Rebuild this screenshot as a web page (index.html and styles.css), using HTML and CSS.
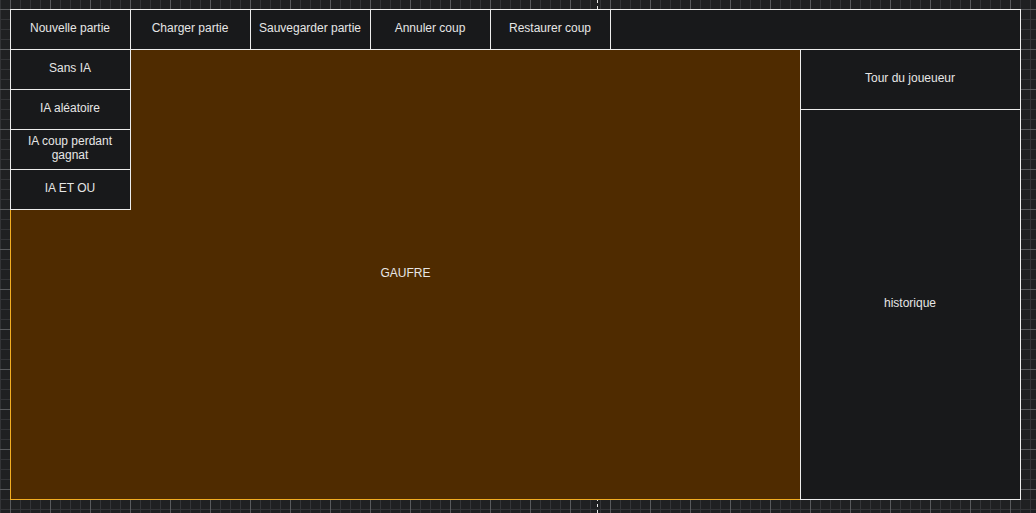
FILE: index.html
```html
<!DOCTYPE html>
<html lang="fr">
<head>
<meta charset="utf-8">
<title>Gaufre</title>
<link rel="stylesheet" href="styles.css">
</head>
<body>
<div class="app">
  <div class="toolbar">
    <div class="box btn">Nouvelle partie</div>
    <div class="box btn">Charger partie</div>
    <div class="box btn">Sauvegarder partie</div>
    <div class="box btn">Annuler coup</div>
    <div class="box btn">Restaurer coup</div>
    <div class="box filler"></div>
  </div>
  <div class="main">
    <div class="gaufre">
      <div class="gaufre-label">GAUFRE</div>
      <div class="menu">
        <div class="box item">Sans IA</div>
        <div class="box item">IA aléatoire</div>
        <div class="box item">IA coup perdant gagnat</div>
        <div class="box item">IA ET OU</div>
      </div>
    </div>
    <div class="side">
      <div class="box turn">Tour du joueueur</div>
      <div class="box history">historique</div>
    </div>
  </div>
</div>
</body>
</html>
```

FILE: styles.css
```css
html, body {
  margin: 0;
  height: 100%;
}

body {
  padding: 9px 0 0 10px;
  box-sizing: border-box;
  background-color: #1f2022;
  background-image:
    repeating-linear-gradient(to bottom, #e8e8e8 0 3px, transparent 3px 6px),
    linear-gradient(to right, #58595c 1px, transparent 1px),
    linear-gradient(to bottom, #58595c 1px, transparent 1px),
    linear-gradient(to right, #333437 1px, transparent 1px),
    linear-gradient(to bottom, #333437 1px, transparent 1px);
  background-size: 1px 100%, 40px 40px, 40px 40px, 10px 10px, 10px 10px;
  background-position: 597px 0, 10px 9px, 10px 9px, 10px 9px, 10px 9px;
  background-repeat: no-repeat, repeat, repeat, repeat, repeat;
  font-family: "Liberation Sans", Arial, sans-serif;
  font-size: 12px;
  line-height: 14px;
  color: #e6e6e6;
}

.app {
  width: 1011px;
  display: flex;
  flex-direction: column;
}

.box {
  box-sizing: border-box;
  border: 1px solid #ededed;
  background: #18191b;
  display: flex;
  align-items: center;
  justify-content: center;
  text-align: center;
  padding: 0 4px 3px 3px;
}

.toolbar {
  display: flex;
  height: 41px;
  position: relative;
  z-index: 2;
}

.btn {
  width: 121px;
  margin-right: -1px;
  flex: none;
}

.filler {
  flex: 1;
  margin-right: 0;
}

.main {
  display: flex;
  height: 451px;
  margin-top: -1px;
}

.gaufre {
  box-sizing: border-box;
  width: 791px;
  flex: none;
  border: 1px solid #f2ad22;
  background: #4f2b00;
  display: grid;
  grid-template: 1fr / 1fr;
}

.gaufre-label {
  grid-area: 1 / 1;
  align-self: center;
  justify-self: center;
  padding-bottom: 4px;
}

.menu {
  grid-area: 1 / 1;
  align-self: start;
  justify-self: start;
  margin: -1px 0 0 -1px;
  display: flex;
  flex-direction: column;
  position: relative;
  z-index: 1;
}

.item {
  width: 121px;
  height: 41px;
  margin-bottom: -1px;
}

.side {
  width: 221px;
  margin-left: -1px;
  display: flex;
  flex-direction: column;
  position: relative;
  z-index: 1;
}

.turn {
  height: 61px;
}

.history {
  height: 391px;
  margin-top: -1px;
}
```
